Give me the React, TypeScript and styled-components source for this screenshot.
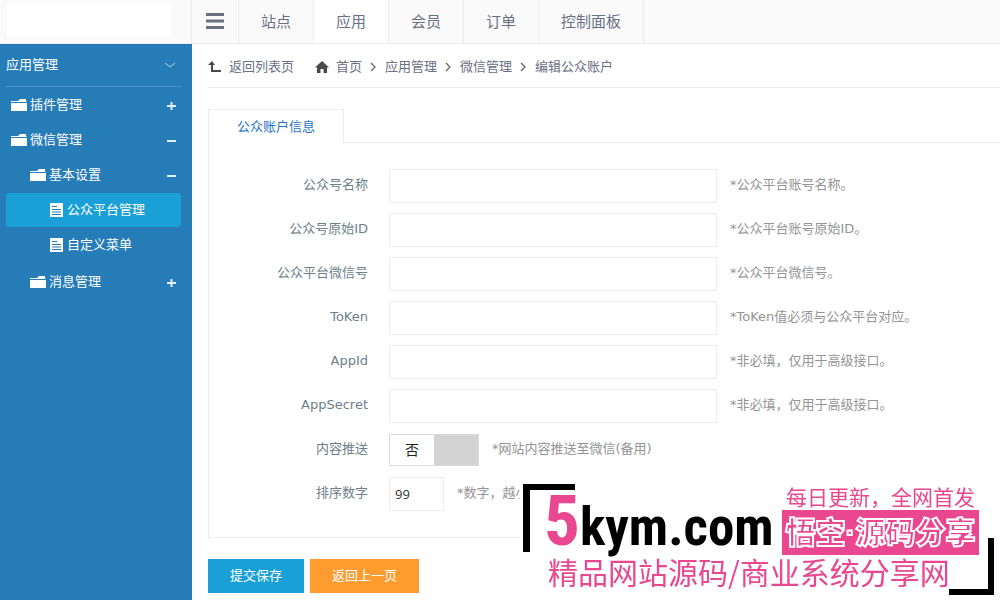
import React, { useState } from "react";
import styled, { createGlobalStyle } from "styled-components";

const cjk = `"Noto Sans CJK SC", sans-serif`;

const GlobalStyle = createGlobalStyle`
  *, *::before, *::after { box-sizing: border-box; }
  body {
    margin: 0;
    background: #fff;
    color: #6a7084;
    font-family: "DejaVu Sans", ${cjk};
    font-size: 13px;
    line-height: 20px;
    overflow-x: hidden;
  }
  a { color: inherit; text-decoration: none; }
  button, input { font: inherit; }
`;

const Page = styled.div`
  min-height: 100vh;
  display: flex;
  flex-direction: column;
`;

const TopBar = styled.header`
  display: flex;
  height: 44px;
  background: #fafafa;
  border-bottom: 1px solid #ececec;
`;

const Brand = styled.div`
  width: 192px;
  padding: 3px 20px 7px 7px;
  border-right: 1px solid #ececec;
`;

const BrandPlate = styled.div`
  height: 100%;
  background: #fff;
`;

const MenuButton = styled.button`
  width: 47px;
  padding: 0 0 2px;
  border: 0;
  border-right: 1px solid #ececec;
  background: transparent;
  display: flex;
  align-items: center;
  justify-content: center;
`;

const TopNav = styled.nav`
  display: flex;
`;

const TopLink = styled.a<{ $active?: boolean }>`
  padding: 2px 22px 0;
  border-right: 1px solid #ececec;
  background: ${(p) => (p.$active ? "#fff" : "transparent")};
  font-size: 15px;
  line-height: 41px;
`;

const Body = styled.div`
  flex: 1;
  display: flex;
`;

const Sidebar = styled.aside`
  flex: none;
  width: 192px;
  padding: 0 11px 0 6px;
  background: #267cb7;
  color: #fff;
`;

const SideHead = styled.div`
  height: 43px;
  margin-bottom: 1px;
  padding-right: 5px;
  display: flex;
  align-items: center;
  justify-content: space-between;
  border-bottom: 1px solid #4d94c4;
`;

const SideItem = styled.a<{ $level: number; $active?: boolean }>`
  height: 34px;
  margin-top: 1px;
  padding: 0 4px 0 ${(p) => p.$level * 19 - 14}px;
  display: flex;
  align-items: center;
  gap: 3px;
  border-radius: 3px;
  background: ${(p) => (p.$active ? "#1a9fd6" : "transparent")};
`;

const SubList = styled.div`
  padding-bottom: 2px;
`;

const SideText = styled.span`
  flex: 1;
`;

const Main = styled.main`
  flex: 1;
  min-width: 0;
  padding-left: 16px;
`;

const Crumbs = styled.nav`
  height: 44px;
  padding-top: 2px;
  display: flex;
  align-items: center;
  gap: 8px;
  border-bottom: 1px solid #ececec;
`;

const CrumbLink = styled.a<{ $spaced?: boolean }>`
  display: flex;
  align-items: center;
  gap: 7px;
  margin-right: ${(p) => (p.$spaced ? 13 : 0)}px;
`;

const Tabs = styled.div`
  display: flex;
  margin-top: 21px;
  border-bottom: 1px solid #ececec;
`;

const Tab = styled.button`
  height: 34px;
  margin-bottom: -1px;
  padding: 0 28px;
  border: 1px solid #ececec;
  border-bottom: 0;
  background: #fff;
  color: #2a74c8;
`;

const Panel = styled.section`
  padding: 26px 0;
  display: flex;
  flex-direction: column;
  gap: 10px;
  border: 1px solid #ececec;
  border-width: 0 0 1px 1px;
`;

const Row = styled.div`
  height: 34px;
  display: flex;
  align-items: center;
`;

const Label = styled.label`
  width: 159px;
  margin-right: 21px;
  padding-bottom: 2px;
  text-align: right;
  color: #6c7f89;
`;

const TextBox = styled.input<{ $short?: boolean }>`
  width: ${(p) => (p.$short ? 55 : 328)}px;
  height: 34px;
  padding: 0 5px;
  border: 1px solid #ececec;
  background: #fff;
  color: #333;
  font-family: "Open Sans", ${cjk};
`;

const Note = styled.span`
  margin-left: 13px;
  padding-bottom: 2px;
  color: #949494;
  white-space: nowrap;
`;

const Toggle = styled.span`
  position: relative;
  width: 90px;
  height: 32px;
  display: flex;
  border: 1px solid #d9d9d9;
  background: #d3d3d3;
`;

const ToggleBox = styled.input`
  position: absolute;
  inset: 0;
  width: 100%;
  height: 100%;
  margin: 0;
  opacity: 0;
`;

const Knob = styled.span<{ $on: boolean }>`
  width: 44px;
  margin-left: ${(p) => (p.$on ? 44 : 0)}px;
  background: #fff;
  color: #222;
  font-size: 14px;
  line-height: 30px;
  text-align: center;
`;

const Actions = styled.div`
  display: flex;
  gap: 6px;
  margin-top: 21px;
`;

const Action = styled.button<{ $tone: string }>`
  height: 34px;
  padding: 0 22px;
  border: 0;
  background: ${(p) => p.$tone};
  color: #fff;
`;

const Promo = styled.aside`
  position: fixed;
  right: 0;
  bottom: 0;
  width: 480px;
  height: 117px;
  background: #fff;
  color: #e9478f;
  font-family: ${cjk};
`;

const Corner = styled.span<{ $end?: boolean }>`
  position: absolute;
  ${(p) =>
    p.$end
      ? "right: 6px; bottom: 5px; width: 45px; height: 57px; border-right: 6px solid #000; border-bottom: 6px solid #000;"
      : "left: 3px; top: 1px; width: 52px; height: 68px; border-left: 7px solid #000; border-top: 6px solid #000;"}
`;

const PromoTop = styled.div`
  display: flex;
  height: 72px;
  justify-content: space-between;
  padding: 0 21px 0 24px;
`;

const Site = styled.a`
  display: flex;
  align-items: baseline;
  color: #000;
  font: bold 53px/76px "Roboto Condensed", Lato, sans-serif;
`;

const Five = styled.span`
  color: #e9478f;
  font-size: 71px;
`;

const PromoSide = styled.div`
  flex: none;
  width: 197px;
  text-align: center;
`;

const Daily = styled.div`
  font-size: 21px;
  line-height: 27px;
  white-space: nowrap;
`;

const Plate = styled.div`
  height: 45px;
  background: #e9478f;
  color: #e9478f;
  -webkit-text-stroke: 2px #fff;
  font-family: "Liberation Sans", ${cjk};
  font-size: 30px;
  font-weight: 900;
  line-height: 45px;
  white-space: nowrap;
`;

const Slogan = styled.div`
  padding-left: 28px;
  font-size: 30px;
  line-height: 32px;
  white-space: nowrap;
`;

const FolderIcon = () => (
  <svg width="16" height="14" viewBox="0 0 16 14" fill="#fff">
    <path d="M0 3h7l2-2h6v2h.5v1H0z" />
    <path d="M0 5h16v8H0z" />
  </svg>
);

const DocIcon = () => (
  <svg width="15" height="16" viewBox="0 0 15 16">
    <path d="M1 1h13v14H1z" fill="#fff" />
    <path d="M3 4.500h5M3 7.500h9M3 10h9M3 12.500h9" stroke="#267cb7" />
  </svg>
);

const SignIcon = ({ open }: { open: boolean }) => (
  <svg width="11" height="12" viewBox="0 0 11 12" stroke="#e6f1f8" strokeWidth="2">
    <path d={open ? "M1 7h9" : "M1 7h9M5.500 3v8"} />
  </svg>
);

const BackIcon = () => (
  <svg width="14" height="12" viewBox="0 0 14 12">
    <path d="M4 3v7h9" fill="none" stroke="#4a4a4a" strokeWidth="2" />
    <path d="M0 4l4-4 3 4z" fill="#4a4a4a" />
  </svg>
);

const HomeIcon = () => (
  <svg width="14" height="12" viewBox="0 0 14 12">
    <path d="M7 0l7 6.500H12V12H8.500V8h-3v4H2V6.500H0z" fill="#4a4a4a" />
  </svg>
);

const Chevron = () => (
  <svg width="7" height="10" viewBox="0 0 7 10">
    <path d="M1 1l4 4-4 4" fill="none" stroke="#666" strokeWidth="1.300" />
  </svg>
);

type Item = { text: string; level: number; open?: boolean; active?: boolean };

const upperItems: Item[] = [
  { text: "插件管理", level: 1, open: false },
  { text: "微信管理", level: 1, open: true },
  { text: "基本设置", level: 2, open: true },
  { text: "公众平台管理", level: 3, active: true },
  { text: "自定义菜单", level: 3 },
];

const lowerItems: Item[] = [{ text: "消息管理", level: 2, open: false }];

const SideEntry = ({ item }: { item: Item }) => (
  <SideItem href="#" $level={item.level} $active={item.active}>
    {item.level === 3 ? <DocIcon /> : <FolderIcon />}
    <SideText>{item.text}</SideText>
    {item.open !== undefined && <SignIcon open={item.open} />}
  </SideItem>
);

const fields = [
  { id: "name", label: "公众号名称", note: "*公众平台账号名称。" },
  { id: "origin", label: "公众号原始ID", note: "*公众平台账号原始ID。" },
  { id: "wechat", label: "公众平台微信号", note: "*公众平台微信号。" },
  { id: "token", label: "ToKen", note: "*ToKen值必须与公众平台对应。" },
  { id: "appid", label: "AppId", note: "*非必填，仅用于高级接口。" },
  { id: "secret", label: "AppSecret", note: "*非必填，仅用于高级接口。" },
];

export default function App() {
  const [push, setPush] = useState(false);
  return (
    <Page>
      <GlobalStyle />
      <TopBar>
        <Brand>
          <BrandPlate />
        </Brand>
        <MenuButton aria-label="菜单">
          <svg width="18" height="16" viewBox="0 0 18 16" stroke="#6a7084" strokeWidth="3">
            <path d="M0 1.500h18M0 8h18M0 14.500h18" />
          </svg>
        </MenuButton>
        <TopNav>
          {["站点", "应用", "会员", "订单", "控制面板"].map((t) => (
            <TopLink key={t} href="#" $active={t === "应用"}>
              {t}
            </TopLink>
          ))}
        </TopNav>
      </TopBar>
      <Body>
        <Sidebar>
          <SideHead>
            应用管理
            <svg width="12" height="8" viewBox="0 0 12 8">
              <path d="M1 2l5 4 5-4" fill="none" stroke="#7fb4d8" strokeWidth="1.300" />
            </svg>
          </SideHead>
          <SubList>
            {upperItems.map((i) => (
              <SideEntry key={i.text} item={i} />
            ))}
          </SubList>
          {lowerItems.map((i) => (
            <SideEntry key={i.text} item={i} />
          ))}
        </Sidebar>
        <Main>
          <Crumbs>
            <CrumbLink href="#" $spaced>
              <BackIcon />
              返回列表页
            </CrumbLink>
            <CrumbLink href="#">
              <HomeIcon />
              首页
            </CrumbLink>
            <Chevron />
            <CrumbLink href="#">应用管理</CrumbLink>
            <Chevron />
            <CrumbLink href="#">微信管理</CrumbLink>
            <Chevron />
            <span>编辑公众账户</span>
          </Crumbs>
          <Tabs>
            <Tab>公众账户信息</Tab>
          </Tabs>
          <Panel>
            {fields.map((f) => (
              <Row key={f.id}>
                <Label htmlFor={f.id}>{f.label}</Label>
                <TextBox id={f.id} />
                <Note>{f.note}</Note>
              </Row>
            ))}
            <Row>
              <Label htmlFor="push">内容推送</Label>
              <Toggle>
                <Knob $on={push}>{push ? "是" : "否"}</Knob>
                <ToggleBox
                  id="push"
                  type="checkbox"
                  checked={push}
                  onChange={(e) => setPush(e.target.checked)}
                />
              </Toggle>
              <Note>*网站内容推送至微信(备用)</Note>
            </Row>
            <Row>
              <Label htmlFor="sort">排序数字</Label>
              <TextBox id="sort" $short defaultValue="99" />
              <Note>*数字，越小</Note>
            </Row>
          </Panel>
          <Actions>
            <Action $tone="#1a9fd6">提交保存</Action>
            <Action $tone="#ff9c2f">返回上一页</Action>
          </Actions>
        </Main>
      </Body>
      <Promo>
        <Corner />
        <PromoTop>
          <Site href="#">
            <Five>5</Five>kym.com
          </Site>
          <PromoSide>
            <Daily>每日更新，全网首发</Daily>
            <Plate>悟空·源码分享</Plate>
          </PromoSide>
        </PromoTop>
        <Slogan>精品网站源码/商业系统分享网</Slogan>
        <Corner $end />
      </Promo>
    </Page>
  );
}
